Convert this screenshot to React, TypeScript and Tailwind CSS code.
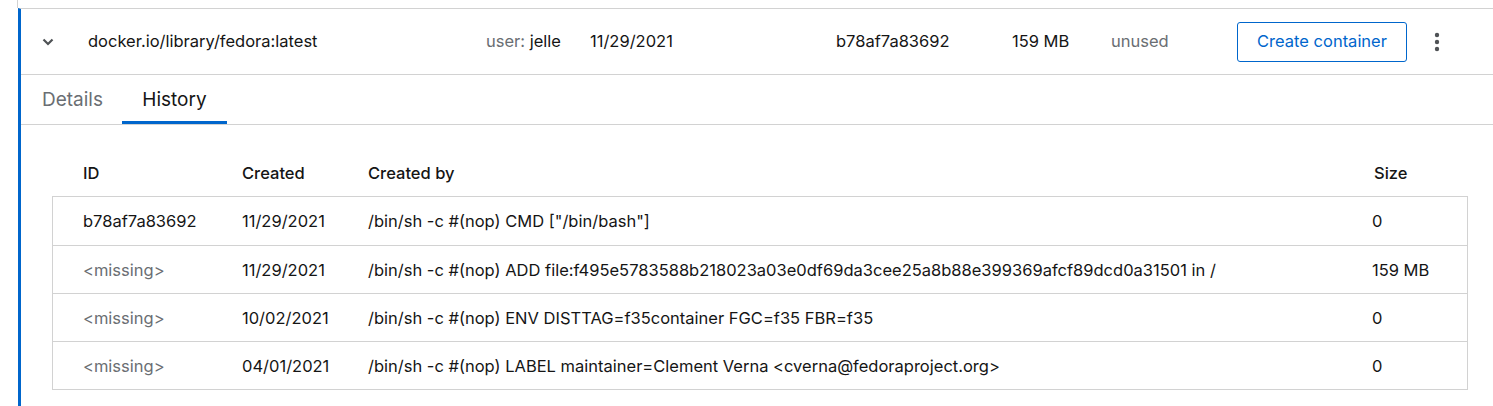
import React from "react";

const rows = [
  { id: "b78af7a83692", created: "11/29/2021", by: '/bin/sh -c #(nop) CMD ["/bin/bash"]', size: "0" },
  {
    id: "<missing>",
    created: "11/29/2021",
    by: "/bin/sh -c #(nop) ADD file:f495e5783588b218023a03e0df69da3cee25a8b88e399369afcf89dcd0a31501 in /",
    size: "159 MB",
  },
  { id: "<missing>", created: "10/02/2021", by: "/bin/sh -c #(nop) ENV DISTTAG=f35container FGC=f35 FBR=f35", size: "0" },
  {
    id: "<missing>",
    created: "04/01/2021",
    by: "/bin/sh -c #(nop) LABEL maintainer=Clement Verna <cverna@fedoraproject.org>",
    size: "0",
  },
];

const Chevron = () => (
  <svg width="12" height="8" viewBox="0 0 12 8" className="text-[#4f5255]">
    <path d="M1.5 1.5 L6 6 L10.5 1.5" fill="none" stroke="currentColor" strokeWidth="2.2" />
  </svg>
);

const Kebab = () => (
  <svg width="6" height="20" viewBox="0 0 6 20" className="text-[#4f5255]">
    <circle cx="3" cy="3" r="2.2" fill="currentColor" />
    <circle cx="3" cy="10" r="2.2" fill="currentColor" />
    <circle cx="3" cy="17" r="2.2" fill="currentColor" />
  </svg>
);

export default function App() {
  return (
    <div className="w-[1493px] h-[406px] overflow-hidden bg-white text-[#151515] text-[16.5px] font-['Inter',sans-serif]">
      <div className="h-[8px] ml-[17px] border-l border-[#d2d2d2]" />
      <div className="ml-[18px] h-[398px] border-l-[3px] border-[#0066cc] border-t border-t-[#d2d2d2]">
        <div className="flex items-center h-[66px] border-b border-[#d2d2d2]">
          <div className="w-[67px] pl-[21px] flex items-center">
            <Chevron />
          </div>
          <div className="w-[398px]">docker.io/library/fedora:latest</div>
          <div className="w-[104px]">
            <span className="text-[#6a6e73]">user:</span> jelle
          </div>
          <div className="w-[246px]">11/29/2021</div>
          <div className="w-[176px]">b78af7a83692</div>
          <div className="w-[99px]">159 MB</div>
          <div className="w-[126px] text-[#6a6e73]">unused</div>
          <button className="w-[170px] h-[40px] border border-[#0066cc] rounded-[3px] text-[#0066cc]">
            Create container
          </button>
          <div className="ml-[27px] flex items-center">
            <Kebab />
          </div>
        </div>
        <div className="flex h-[50px] border-b border-[#d2d2d2] text-[19px]">
          <div className="w-[101px] pl-[21px] pt-[2px] flex items-center text-[#6a6e73]">Details</div>
          <div className="w-[105px] flex items-center justify-center border-b-[3px] border-[#0066cc] pt-[5px]">
            History
          </div>
        </div>
        <div className="pt-[25px] pl-[31px] pr-[25px]">
          <div className="flex items-center h-[46px] font-medium">
            <div className="w-[190px] pl-[31px]">ID</div>
            <div className="w-[126px]">Created</div>
            <div className="flex-1">Created by</div>
            <div className="w-[94px]">Size</div>
          </div>
          <div className="border border-[#d2d2d2]">
            {rows.map((r, i) => (
              <div
                key={i}
                className={`flex items-center h-[48px] pt-[1px] ${i > 0 ? "border-t border-[#d2d2d2]" : ""}`}
              >
                <div className={`w-[189px] pl-[30px] ${r.id === "<missing>" ? "text-[#6a6e73]" : ""}`}>{r.id}</div>
                <div className="w-[126px]">{r.created}</div>
                <div className="flex-1 whitespace-nowrap">{r.by}</div>
                <div className="w-[95px]">{r.size}</div>
              </div>
            ))}
          </div>
        </div>
      </div>
    </div>
  );
}
